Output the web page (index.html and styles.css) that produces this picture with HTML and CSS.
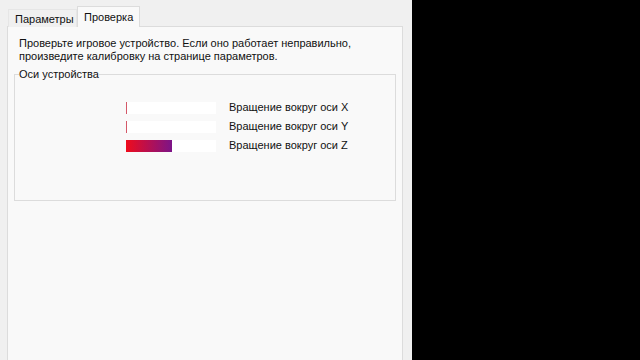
FILE: index.html
```html
<!DOCTYPE html>
<html lang="ru">
<head>
<meta charset="utf-8">
<link rel="stylesheet" href="styles.css">
</head>
<body>
<div class="screen">
  <div class="window">
    <div class="tabs">
      <div class="tab">Параметры</div>
      <div class="tab active">Проверка</div>
    </div>
    <div class="panel">
      <p class="intro">Проверьте игровое устройство. Если оно работает неправильно,<br>произведите калибровку на странице параметров.</p>
      <fieldset class="group">
        <legend>Оси устройства</legend>
        <div class="axes">
          <div class="axis">
            <div class="bar"><div class="fill tick"></div></div>
            <span class="label">Вращение вокруг оси X</span>
          </div>
          <div class="axis">
            <div class="bar"><div class="fill tick"></div></div>
            <span class="label">Вращение вокруг оси Y</span>
          </div>
          <div class="axis">
            <div class="bar"><div class="fill grad" style="width:46px"></div></div>
            <span class="label">Вращение вокруг оси Z</span>
          </div>
        </div>
      </fieldset>
    </div>
  </div>
  <div class="void"></div>
</div>
</body>
</html>
```
FILE: styles.css
```css
html, body {
  margin: 0;
  padding: 0;
}
body {
  width: 640px;
  height: 360px;
  overflow: hidden;
  font-family: "Liberation Sans", Arial, sans-serif;
  font-size: 11px;
  color: #111;
}
.screen {
  display: flex;
  height: 360px;
}
.window {
  width: 412px;
  background: #f0f0f0;
  display: flex;
  flex-direction: column;
  box-sizing: border-box;
  padding: 0 9px 0 7px;
}
.void {
  flex: 1;
  background: #000;
}
.tabs {
  display: flex;
  align-items: flex-end;
  padding: 6px 0 0 1px;
  height: 21px;
  position: relative;
  z-index: 1;
  margin-bottom: -1px;
}
.tab {
  height: 18px;
  line-height: 18px;
  padding: 0 0 0 6px;
  border: 1px solid #e6e6e6;
  border-bottom: none;
  background: #f0f0f0;
  box-sizing: border-box;
  width: 69px;
}
.tab.active {
  height: 21px;
  line-height: 20px;
  width: 63px;
  background: #f9f9f9;
  border-color: #dcdcdc;
  padding: 0 0 0 6px;
}
.panel {
  flex: 1;
  background: #f9f9f9;
  border: 1px solid #dcdcdc;
  border-bottom: none;
  padding: 10px 6px 0 6px;
}
.intro {
  margin: 0 0 0 5px;
  line-height: 13px;
}
.group {
  margin: 5px 0 0 0;
  padding: 0 4px 0 4px;
  border: 1px solid #dcdcdc;
  height: 133px;
  box-sizing: border-box;
}
.group legend {
  padding: 0;
  line-height: 13px;
}
.axes {
  display: flex;
  flex-direction: column;
  gap: 6px;
  padding-top: 20px;
}
.axis {
  display: flex;
  align-items: center;
  height: 13px;
}
.bar {
  width: 90px;
  height: 12px;
  background: #ffffff;
  margin-left: 107px;
  margin-right: 13px;
  display: flex;
}
.fill {
  height: 100%;
}
.tick {
  width: 1px;
  background: #d45868;
}
.grad {
  background: linear-gradient(to right, #ef0c1c, #7c1488);
}
.label {
  line-height: 13px;
  white-space: nowrap;
}
```
